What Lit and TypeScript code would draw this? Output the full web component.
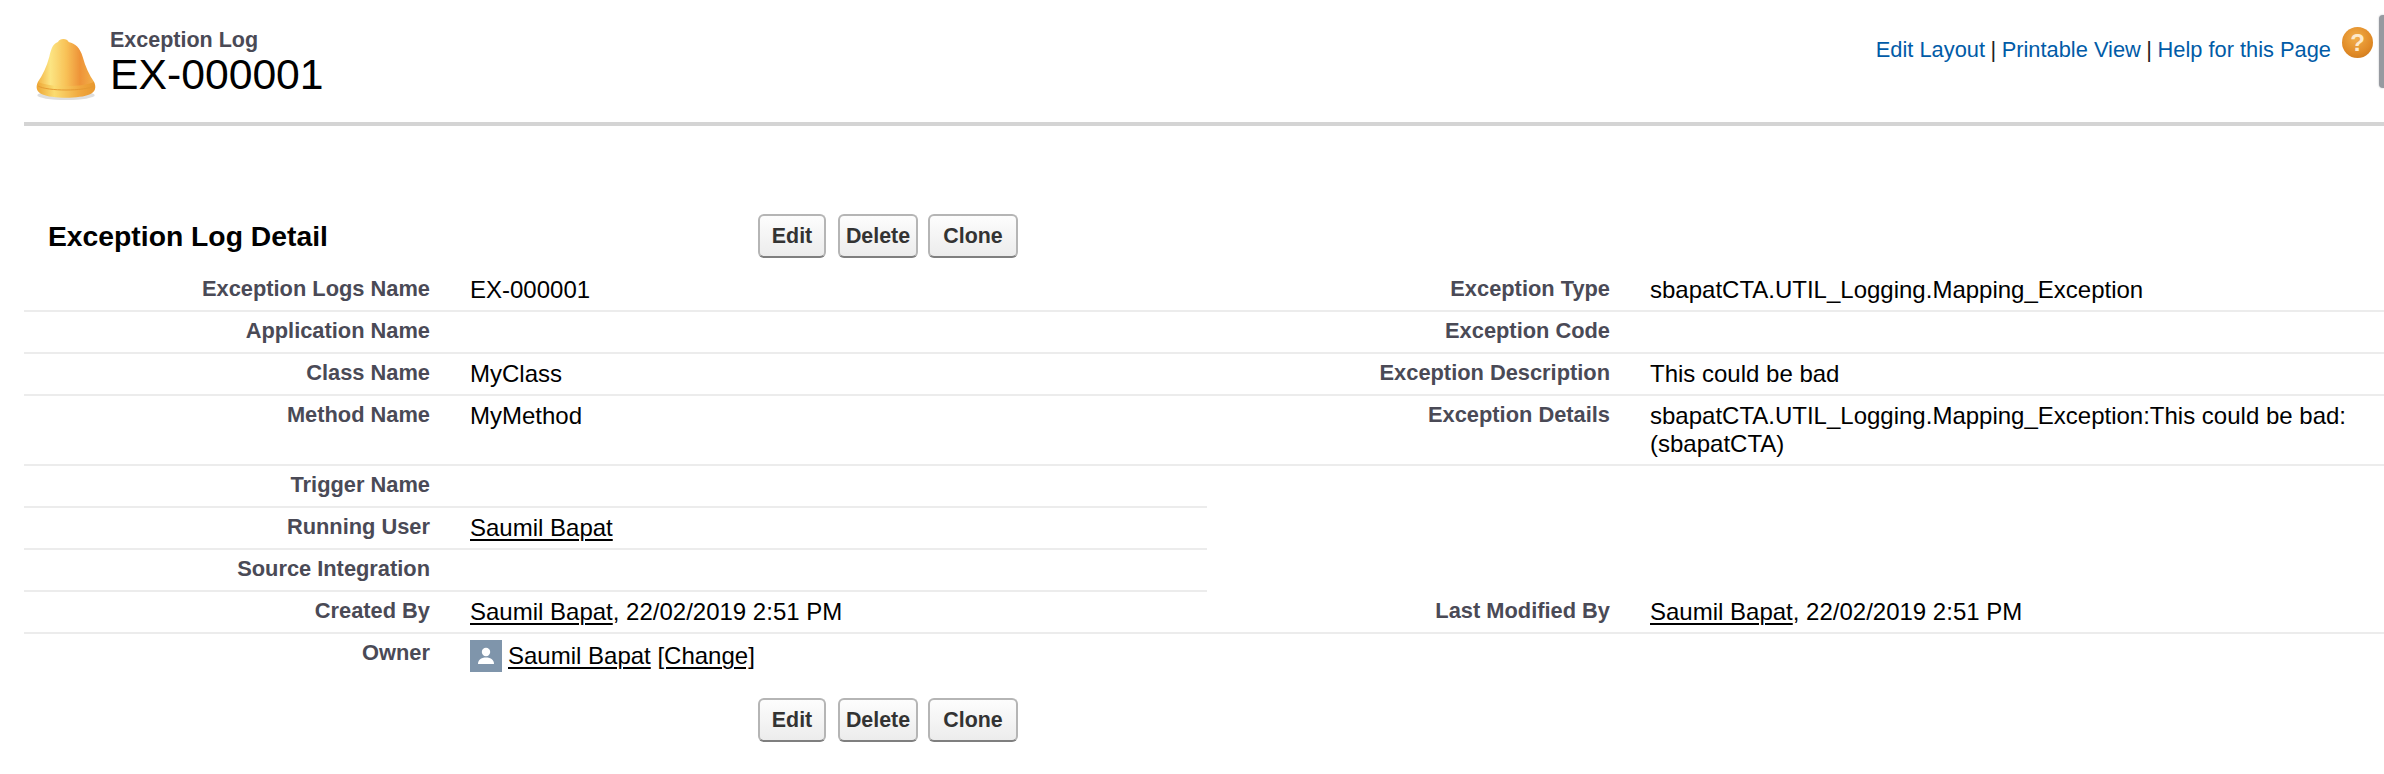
import {LitElement, html, css, nothing} from 'lit';
import {customElement} from 'lit/decorators.js';

type Row = {
  label: string;
  value?: unknown;
  label2?: string;
  value2?: unknown;
};

const user = html`<a href="#">Saumil Bapat</a>`;
const stamp = html`${user}, 22/02/2019 2:51 PM`;

const rows: Row[] = [
  {label: 'Exception Logs Name', value: 'EX-000001', label2: 'Exception Type', value2: 'sbapatCTA.UTIL_Logging.Mapping_Exception'},
  {label: 'Application Name', label2: 'Exception Code'},
  {label: 'Class Name', value: 'MyClass', label2: 'Exception Description', value2: 'This could be bad'},
  {label: 'Method Name', value: 'MyMethod', label2: 'Exception Details', value2: html`sbapatCTA.UTIL_Logging.Mapping_Exception:This could be bad:<br />(sbapatCTA)`},
  {label: 'Trigger Name'},
  {label: 'Running User', value: user},
  {label: 'Source Integration'},
  {label: 'Created By', value: stamp, label2: 'Last Modified By', value2: stamp},
];

@customElement('app-root')
export class AppRoot extends LitElement {
  static styles = css`
    :host {
      display: block;
      position: relative;
      height: 774px;
      overflow: hidden;
      background: #fff;
      color: #000;
      font-family: "Liberation Sans", Arial, sans-serif;
      font-size: 24px;
    }
    a {
      color: inherit;
      text-decoration-thickness: 2px;
      text-underline-offset: 3px;
    }

    .header {
      display: flex;
      justify-content: space-between;
      height: 122px;
      margin-left: 24px;
      border-bottom: 4px solid #d4d4d4;
    }
    .title {
      display: flex;
      align-items: flex-start;
      padding: 28px 0 0 6px;
    }
    .bell {
      width: 75px;
      height: 75px;
      margin: 2px 5px 0 0;
    }
    .kicker {
      font-size: 21.5px;
      line-height: 24px;
      font-weight: 700;
      color: #4a4a56;
    }
    .name {
      font-size: 42.7px;
      line-height: 44px;
    }
    .links {
      display: flex;
      align-items: flex-start;
      padding: 35px 11px 0 0;
      color: #015ba7;
      font-size: 21.84px;
      line-height: 30px;
    }
    .links a {
      text-decoration: none;
    }
    .links .sep {
      color: #222;
      margin: 0 5.5px;
    }
    .help {
      width: 31px;
      height: 31px;
      margin: -8px 0 0 11px;
      border-radius: 50%;
      background: radial-gradient(circle at 45% 35%, #f2ae4b, #e08a26 60%, #c2701a);
      color: #fde9cb;
      font-size: 24px;
      font-weight: 700;
      line-height: 31px;
      text-align: center;
    }
    .edge {
      position: absolute;
      top: 15px;
      right: 0;
      width: 5px;
      height: 73px;
      border-radius: 4px 0 0 4px;
      background: #969aa0;
      box-shadow: 0 0 2px #b5b8bc;
    }

    .detail {
      margin-left: 24px;
      padding-top: 88px;
    }
    .bar {
      display: grid;
      grid-template-columns: 734px auto;
      align-items: center;
      height: 44px;
    }
    .bar h2 {
      margin: 0;
      padding-left: 24px;
      font-size: 28.3px;
      font-weight: 700;
    }
    .bar.bottom {
      margin-top: 20px;
    }
    .btns {
      display: flex;
      gap: 10px;
    }
    .btn {
      box-sizing: border-box;
      height: 44px;
      padding: 0;
      border: 2px solid #b5b5b5;
      border-bottom-color: #7f7f7f;
      border-radius: 6px;
      background: linear-gradient(#fdfdfd, #ececec);
      color: #333;
      font: 700 21.4px "Liberation Sans", Arial, sans-serif;
    }
    .btn.edit {
      width: 68px;
      margin-right: 2px;
    }
    .btn.delete {
      width: 80px;
    }
    .btn.clone {
      width: 90px;
    }

    .table {
      display: grid;
      grid-template-columns: 422px 761px 419px 1fr;
      margin-top: 12px;
    }
    .cell {
      padding: 6px 0;
      line-height: 28px;
      border-bottom: 2px solid #ececec;
    }
    .cell.none {
      border-bottom-color: transparent;
    }
    .label {
      padding: 5px 16px 7px 0;
      text-align: right;
      font-size: 21.84px;
      font-weight: 700;
      color: #4a4a56;
    }
    .value {
      padding-left: 24px;
    }
    .owner {
      border-bottom: 0;
    }
    .owner .value-line {
      display: flex;
      align-items: center;
      gap: 6px;
    }
    .avatar {
      width: 32px;
      height: 32px;
    }
  `;

  private renderRow(r: Row) {
    const cls = r.label2 !== undefined ? 'cell' : 'cell none';
    return html`
      <div class="cell label">${r.label}</div>
      <div class="cell value">${r.value ?? nothing}</div>
      <div class="${cls} label">${r.label2 ?? nothing}</div>
      <div class="${cls} value">${r.value2 ?? nothing}</div>
    `;
  }

  private buttons() {
    return html`
      <div class="btns">
        <button class="btn edit">Edit</button>
        <button class="btn delete">Delete</button>
        <button class="btn clone">Clone</button>
      </div>
    `;
  }

  render() {
    return html`
      <div class="header">
        <div class="title">
          <svg class="bell" viewBox="0 0 225 225">
            <defs>
              <linearGradient id="bellBody" x1="0" x2="1" y1="0" y2="0">
                <stop offset="0" stop-color="#f3b445" />
                <stop offset=".22" stop-color="#fce583" />
                <stop offset=".5" stop-color="#f8c257" />
                <stop offset=".75" stop-color="#ee9338" />
                <stop offset="1" stop-color="#f3b04a" />
              </linearGradient>
              <linearGradient id="bellRim" x1="0" x2="1" y1="0" y2="0">
                <stop offset="0" stop-color="#eda636" />
                <stop offset=".3" stop-color="#fbdc70" />
                <stop offset=".75" stop-color="#f0a63d" />
                <stop offset="1" stop-color="#e8982e" />
              </linearGradient>
              <filter id="soft"><feGaussianBlur stdDeviation="1.500" /></filter>
            </defs>
            <g filter="url(#soft)">
              <ellipse cx="108" cy="196" rx="86" ry="14" fill="#bdbdbd" opacity=".5" />
              <path d="M84 36C88 24 112 24 116 36C136 40 150 54 158 80C166 110 178 135 192 155L192 172L24 172L24 155C38 135 50 110 58 80C64 54 70 40 84 36z" fill="url(#bellBody)" />
              <path d="M24 155C50 172 166 172 192 155C200 172 196 185 180 193C150 207 66 207 36 193C20 185 16 172 24 155z" fill="url(#bellRim)" />
              <path d="M24 168C52 184 164 184 192 168" fill="none" stroke="#e59a32" stroke-width="3" />
            </g>
          </svg>
          <div>
            <div class="kicker">Exception Log</div>
            <div class="name">EX-000001</div>
          </div>
        </div>
        <div class="links">
          <a href="#">Edit Layout</a><span class="sep">|</span>
          <a href="#">Printable View</a><span class="sep">|</span>
          <a href="#">Help for this Page</a>
          <div class="help">?</div>
        </div>
      </div>
      <div class="edge"></div>

      <div class="detail">
        <div class="bar">
          <h2>Exception Log Detail</h2>
          ${this.buttons()}
        </div>
        <div class="table">
          ${rows.map((r) => this.renderRow(r))}
          <div class="cell label owner">Owner</div>
          <div class="cell value owner">
            <div class="value-line">
              <svg class="avatar" viewBox="0 0 32 32">
                <rect width="32" height="32" fill="#7f95ab" />
                <circle cx="16" cy="12" r="4.200" fill="#fff" />
                <path d="M8 24c0-4 3-6.500 8-6.500s8 2.500 8 6.500z" fill="#fff" />
              </svg>
              <span><a href="#">Saumil Bapat</a> <a href="#">[Change]</a></span>
            </div>
          </div>
        </div>
        <div class="bar bottom">
          <span></span>
          ${this.buttons()}
        </div>
      </div>
    `;
  }
}
